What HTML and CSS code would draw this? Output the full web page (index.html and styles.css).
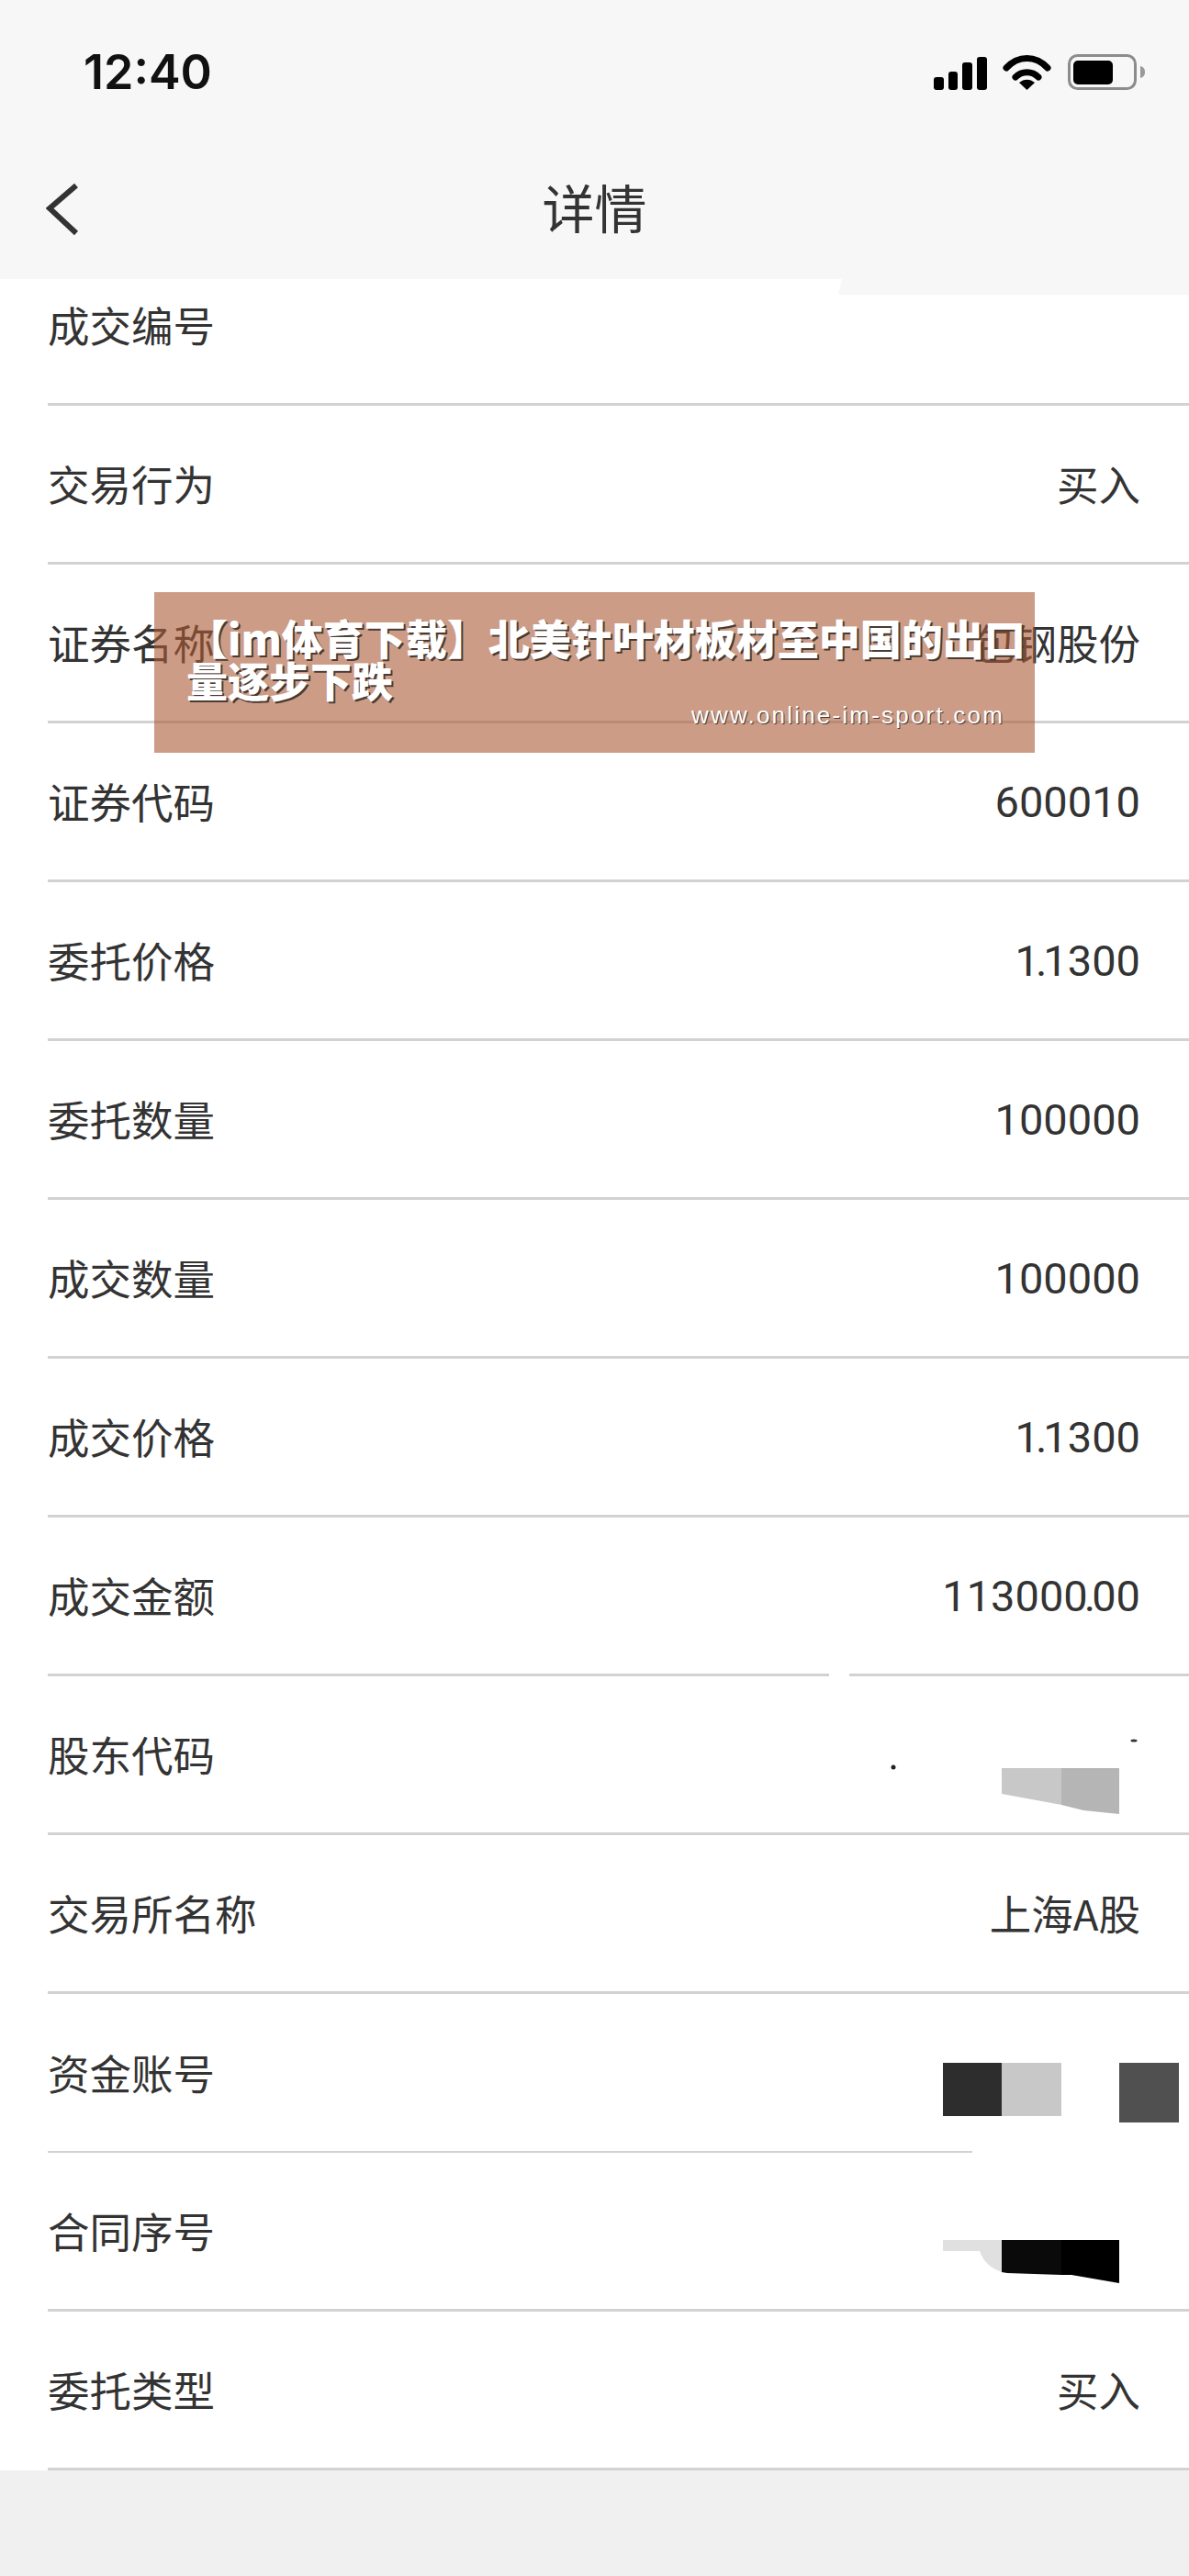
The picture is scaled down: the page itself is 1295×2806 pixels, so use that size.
FILE: index.html
```html
<!DOCTYPE html>
<html>
<head>
  <meta charset="utf-8">
  <title>详情</title>
  <link rel="stylesheet" href="styles.css">
</head>

<body>
  <div class="header">
    <div class="status-bar">
      <span class="status-time">12:40</span>
      <div class="status-icons">
        <svg class="icon-signal" viewBox="0 0 58 36">
          <rect x="0" y="22" width="11" height="14" rx="3"/>
          <rect x="16" y="16" width="10" height="20" rx="3"/>
          <rect x="31" y="6" width="11" height="30" rx="3"/>
          <rect x="47" y="0" width="11" height="36" rx="3"/>
        </svg>
        <svg class="icon-wifi" viewBox="0 0 53 39">
          <path class="wifi-arc" d="M4 15C17 1 36 1 49 15"/>
          <path class="wifi-arc" d="M14 25C21 18 32 18 39 25"/>
          <path d="M18 31C23 26.500 30 26.500 35 31L26.500 39Z"/>
        </svg>
        <svg class="icon-battery" viewBox="0 0 84 39">
          <rect class="battery-shell" x="1.500" y="1.500" width="72" height="36" rx="9"/>
          <rect x="6" y="7" width="43" height="26" rx="5"/>
          <path class="battery-nub" d="M79 13C83 14 84 17 84 19.500C84 22 83 25 79 26Z"/>
        </svg>
      </div>
    </div>
    <div class="nav-bar">
      <svg class="icon-back" viewBox="0 0 40 62">
        <path d="M33 4L4 29L33 56"/>
      </svg>
      <span class="nav-title">详情</span>
    </div>
  </div>

  <div class="detail-list">
    <div class="row row-first">
      <div class="row-inner"><span>成交编号</span></div>
    </div>
    <div class="row">
      <div class="row-inner"><span>交易行为</span><span>买入</span></div>
    </div>
    <div class="row">
      <div class="row-inner"><span>证券名称</span><span>包钢股份</span></div>
    </div>
    <div class="row">
      <div class="row-inner"><span>证券代码</span><span class="num">600010</span></div>
    </div>
    <div class="row">
      <div class="row-inner"><span>委托价格</span><span class="num">1<span class="dot">.</span>1300</span></div>
    </div>
    <div class="row">
      <div class="row-inner"><span>委托数量</span><span class="num">100000</span></div>
    </div>
    <div class="row">
      <div class="row-inner"><span>成交数量</span><span class="num">100000</span></div>
    </div>
    <div class="row">
      <div class="row-inner"><span>成交价格</span><span class="num">1<span class="dot">.</span>1300</span></div>
    </div>
    <div class="row">
      <div class="row-inner"><span>成交金额</span><span class="num">113000<span class="dot">.</span>00</span></div>
      <svg class="row-mask" viewBox="0 0 1295 173">
        <rect x="903" y="168" width="22" height="6" fill="#fff"/>
      </svg>
    </div>
    <div class="row">
      <div class="row-inner"><span>股东代码</span></div>
      <svg class="row-mask" viewBox="0 0 1295 173">
        <path d="M1091 101H1156V141L1091 129Z" fill="#c8c8c8"/>
        <path d="M1156 101H1219V151L1180 147L1156 141Z" fill="#b5b5b5"/>
        <circle cx="973" cy="100" r="2.500" fill="#222"/>
        <ellipse cx="1235" cy="71" rx="3.500" ry="1.500" fill="#333"/>
      </svg>
    </div>
    <div class="row">
      <div class="row-inner"><span>交易所名称</span><span>上海A股</span></div>
    </div>
    <div class="row row-short">
      <div class="row-inner"><span>资金账号</span></div>
      <svg class="row-mask" viewBox="0 0 1295 173">
        <rect x="1027" y="76" width="64" height="58" fill="#2d2d2d"/>
        <rect x="1091" y="76" width="65" height="58" fill="#c8c8c8"/>
        <rect x="1219" y="76" width="65" height="65" fill="#505050"/>
      </svg>
    </div>
    <div class="row">
      <div class="row-inner"><span>合同序号</span></div>
      <svg class="row-mask" viewBox="0 0 1295 173">
        <path d="M1027 96H1091V131Q1073 125 1067 108H1027Z" fill="#e0e0e0"/>
        <path d="M1091 96H1156V134L1097 132L1091 131Z" fill="#0a0a0a"/>
        <path d="M1156 96H1219V143L1167 134L1156 134Z" fill="#000"/>
      </svg>
    </div>
    <div class="row">
      <div class="row-inner"><span>委托类型</span><span>买入</span></div>
    </div>
  </div>

  <div class="banner">
    <div class="banner-title">【im体育下载】北美针叶材板材至中国的出口量逐步下跌</div>
    <div class="banner-url">www.online-im-sport.com</div>
  </div>
</body>
</html>
```

FILE: styles.css
```css
body {
  margin: 0;
  min-height: 2806px;
  position: relative;
  overflow: hidden;
  background-color: #f0f0f0;
  color: #333;
  font-family: "Noto Sans CJK SC", "Liberation Sans", sans-serif;
}

.header {
  position: relative;
  z-index: 1;
  height: 304px;
  background-color: #f7f7f7;
}

/* leftover bit of the nav colour over the first row */
.header::after {
  content: "";
  position: absolute;
  top: 100%;
  left: 913px;
  right: 0;
  height: 17px;
  background-color: #f7f7f7;
  clip-path: polygon(4px 0, 100% 0, 100% 100%, 0 100%);
}

.status-bar {
  display: flex;
  justify-content: space-between;
  align-items: center;
  height: 156px;
  padding: 0 48px 0 91px;
}

.status-time {
  color: #111;
  font-family: Inter, sans-serif;
  font-size: 52px;
  font-weight: 600;
}

.status-icons {
  display: flex;
  align-items: center;
  gap: 17px;
}

.icon-signal {
  width: 58px;
  height: 36px;
  fill: #000;
  margin-top: 3px;
}

.icon-wifi {
  width: 53px;
  height: 39px;
  fill: #000;
}

.wifi-arc {
  fill: none;
  stroke: #000;
  stroke-width: 7;
  stroke-linecap: round;
}

.icon-battery {
  width: 84px;
  height: 39px;
  margin-left: 1px;
}

.battery-shell {
  fill: none;
  stroke: #8c8c8c;
  stroke-width: 3;
}

.battery-nub {
  fill: #999;
}

.nav-bar {
  display: flex;
  justify-content: center;
  align-items: center;
  position: relative;
  height: 136px;
}

.icon-back {
  position: absolute;
  left: 50px;
  top: 42px;
  width: 40px;
  height: 62px;
  fill: none;
  stroke: #333;
  stroke-width: 6;
}

.nav-title {
  font-size: 57px;
  color: #333;
}

.row {
  position: relative;
  height: 173px;
  background-color: #fff;
}

.row-first {
  height: 138px;
}

.row-inner {
  display: flex;
  justify-content: space-between;
  align-items: center;
  box-sizing: border-box;
  height: 100%;
  margin-left: 52px;
  padding: 0 53px 2px 0;
  border-bottom: 3px solid #d2d2d2;
  font-size: 45.5px;
  line-height: 60px;
}

.row-first .row-inner {
  padding-bottom: 37px;
}

.row-short .row-inner {
  margin-right: 236px;
  border-bottom-width: 2px;
}

.num {
  padding-top: 4px;
  font-family: Roboto, sans-serif;
  font-size: 47px;
}

/* the period sits tight between digits here */
.dot {
  margin: 0 -4px;
}

.row-mask {
  position: absolute;
  left: 0;
  top: -1px;
  width: 100%;
  height: 100%;
  overflow: visible;
}

.banner {
  position: absolute;
  left: 168px;
  top: 645px;
  box-sizing: border-box;
  width: 959px;
  height: 175px;
  padding: 27px 10px 0 35px;
  background-color: rgba(170, 90, 53, 0.6);
  color: #fff;
}

.banner-title {
  font-size: 45px;
  font-weight: 900;
  line-height: 46px;
  text-shadow: 2px 2px 0 #4a3a32;
}

.banner-url {
  margin-top: 1px;
  padding-right: 23px;
  font-family: "Liberation Sans", sans-serif;
  font-size: 26px;
  line-height: 28px;
  letter-spacing: 2.2px;
  text-align: right;
  text-shadow: 1px 1px 0 #4a3a32;
}
```
